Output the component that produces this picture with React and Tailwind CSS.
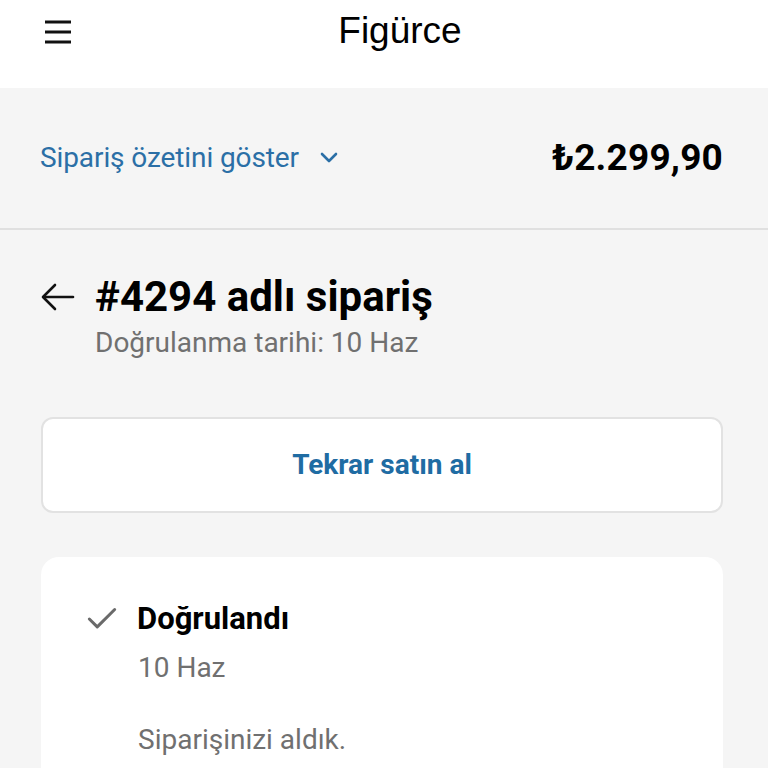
import { Check } from 'lucide-react';

const roboto = { fontFamily: 'Roboto, "Noto Sans", sans-serif' };

function Hamburger() {
  return (
    <svg width="28" height="26" viewBox="0 0 28 26" fill="none" stroke="#111" strokeWidth="3">
      <line x1="1" y1="3" x2="27" y2="3" />
      <line x1="1" y1="13" x2="27" y2="13" />
      <line x1="1" y1="23" x2="27" y2="23" />
    </svg>
  );
}

function Chevron() {
  return (
    <svg width="18" height="12" viewBox="0 0 18 12" fill="none" stroke="#2b6fa6" strokeWidth="2.6" strokeLinecap="round" strokeLinejoin="round">
      <polyline points="2,2 9,9 16,2" />
    </svg>
  );
}

function BackArrow() {
  return (
    <svg width="34" height="28" viewBox="0 0 34 28" fill="none" stroke="#111" strokeWidth="2.6" strokeLinecap="round" strokeLinejoin="round">
      <line x1="3" y1="14" x2="32" y2="14" />
      <polyline points="14,2 2,14 14,26" />
    </svg>
  );
}

export default function App() {
  return (
    <div className="w-[768px] h-[768px] overflow-hidden bg-[#f5f5f5]" style={roboto}>
      {/* Header */}
      <header className="h-[88px] bg-white relative flex items-center justify-center">
        <button className="absolute left-[44px] top-[19px]">
          <Hamburger />
        </button>
        <h1 className="text-[37px] leading-none text-black -mt-[27px] ml-[32px]" style={{ fontFamily: '"Liberation Sans", Arial, sans-serif' }}>
          Figürce
        </h1>
      </header>

      {/* Order summary toggle */}
      <div className="h-[142px] flex items-center justify-between pl-[40px] pr-[45px] border-b-2 border-[#e0e0e0]">
        <button className="flex items-center gap-[21px] text-[28px] text-[#2b6fa6] tracking-[-0.1px]">
          Sipariş özetini göster
          <Chevron />
        </button>
        <span className="text-[37px] font-bold text-black tracking-[0.2px]">₺2.299,90</span>
      </div>

      {/* Order title */}
      <div className="pl-[41px] pr-[45px] pt-[44px]">
        <div className="flex items-center gap-[20px]">
          <BackArrow />
          <h2 className="text-[42px] font-bold leading-[46px] text-black">#4294 adlı sipariş</h2>
        </div>
        <p className="pl-[54px] text-[28px] leading-[34px] text-[#707070] mt-[6px]">Doğrulanma tarihi: 10 Haz</p>

        <button className="mt-[57px] w-full h-[96px] bg-white rounded-[12px] border-2 border-[#e2e2e2] text-[28px] font-bold text-[#1f6ca3]">
          Tekrar satın al
        </button>

        {/* Status card */}
        <div className="mt-[44px] bg-white rounded-[18px] px-[44px] pt-[44px] pb-[40px]">
          <div className="flex items-center gap-[16px] h-[36px]">
            <Check className="w-[38px] h-[38px] -ml-[2px] text-[#6a6a6a]" strokeWidth={1.9} />
            <span className="text-[31px] leading-[36px] font-bold text-black">Doğrulandı</span>
          </div>
          <p className="pl-[53px] text-[28px] leading-[34px] text-[#707070] mt-[14px]">10 Haz</p>
          <p className="pl-[53px] text-[28px] leading-[34px] text-[#707070] mt-[38px]">Siparişinizi aldık.</p>
        </div>
      </div>
    </div>
  );
}
